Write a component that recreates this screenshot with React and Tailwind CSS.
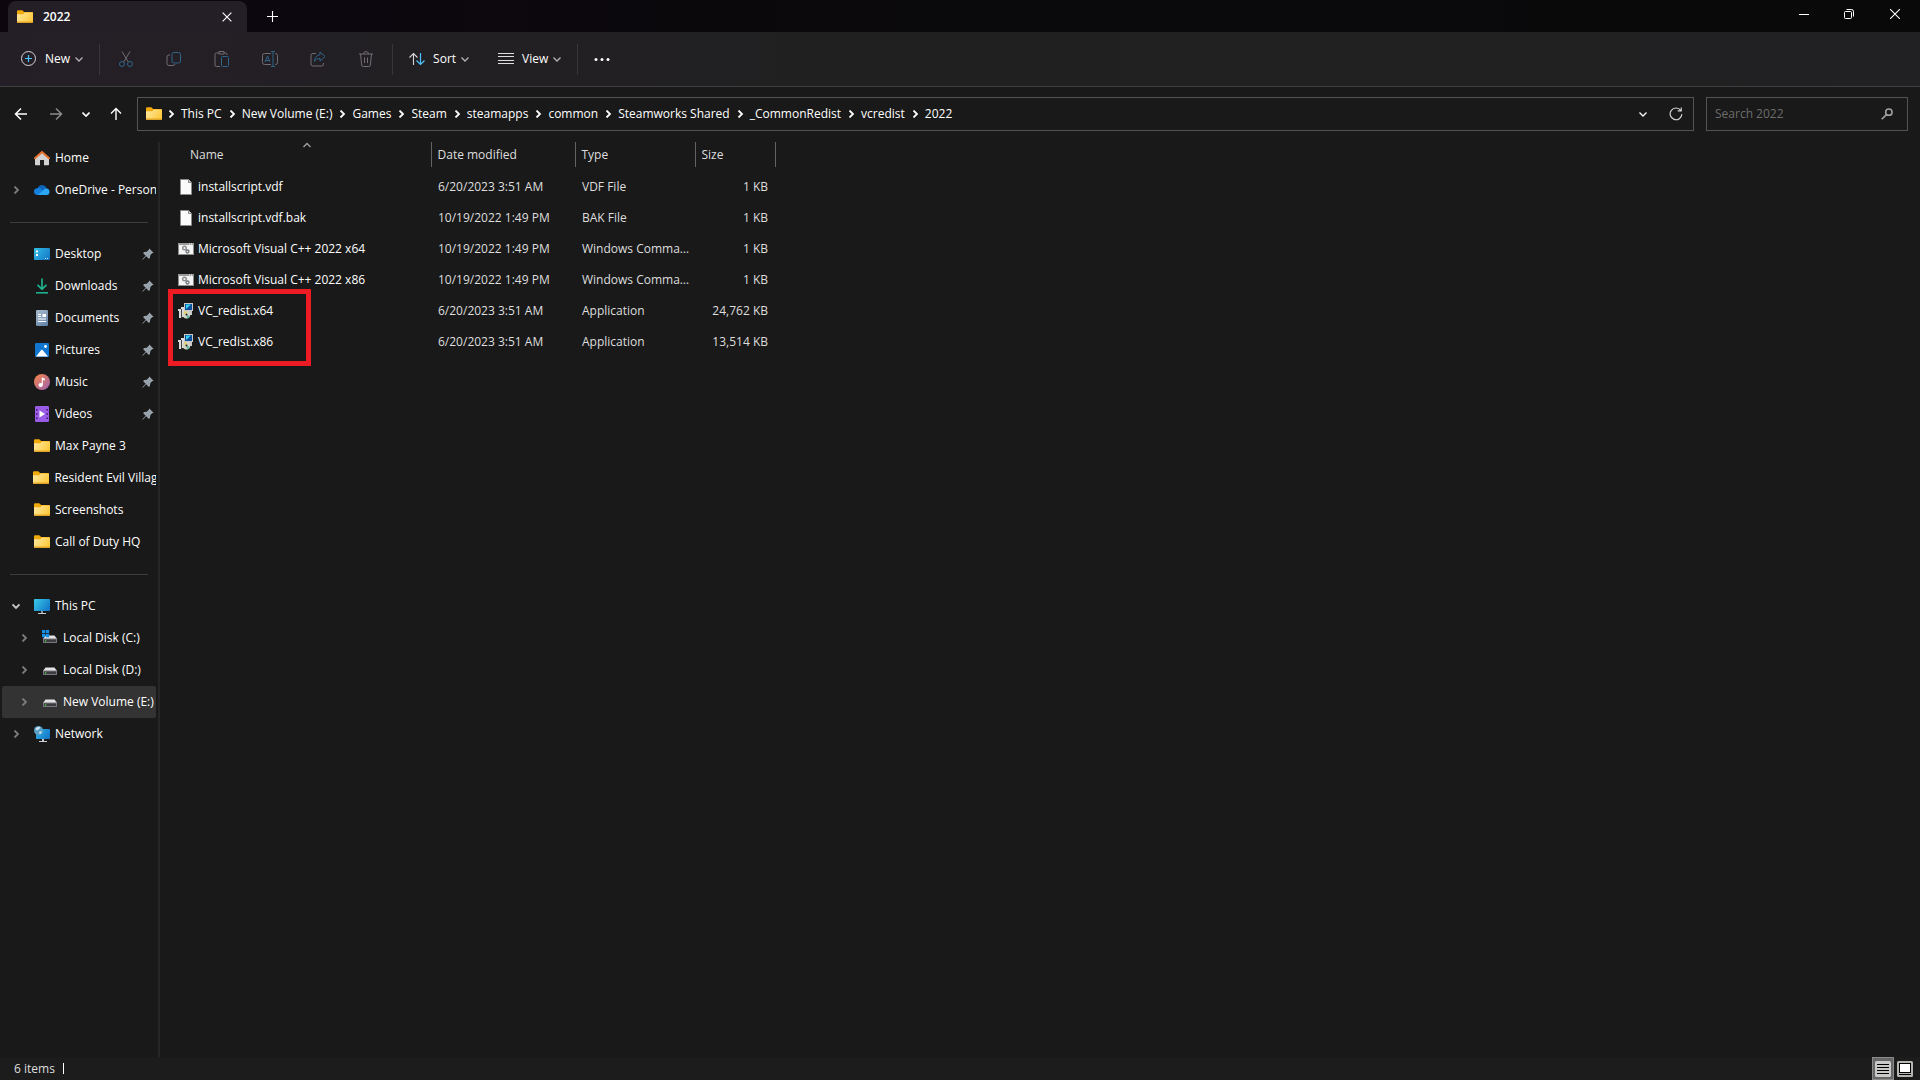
import { useState } from "react";

const breadcrumbs = [
  "This PC",
  "New Volume (E:)",
  "Games",
  "Steam",
  "steamapps",
  "common",
  "Steamworks Shared",
  "_CommonRedist",
  "vcredist",
  "2022",
];

const pinned = [
  { name: "Desktop", icon: DesktopIcon, pin: true },
  { name: "Downloads", icon: DownloadsIcon, pin: true },
  { name: "Documents", icon: DocumentsIcon, pin: true },
  { name: "Pictures", icon: PicturesIcon, pin: true },
  { name: "Music", icon: MusicIcon, pin: true },
  { name: "Videos", icon: VideosIcon, pin: true },
  { name: "Max Payne 3", icon: FolderIcon },
  { name: "Resident Evil Village", icon: FolderIcon },
  { name: "Screenshots", icon: FolderIcon },
  { name: "Call of Duty HQ", icon: FolderIcon },
];

const files = [
  { name: "installscript.vdf", date: "6/20/2023 3:51 AM", type: "VDF File", size: "1 KB", icon: FileIcon },
  { name: "installscript.vdf.bak", date: "10/19/2022 1:49 PM", type: "BAK File", size: "1 KB", icon: FileIcon },
  { name: "Microsoft Visual C++ 2022 x64", date: "10/19/2022 1:49 PM", type: "Windows Command Script", size: "1 KB", icon: BatchIcon },
  { name: "Microsoft Visual C++ 2022 x86", date: "10/19/2022 1:49 PM", type: "Windows Command Script", size: "1 KB", icon: BatchIcon },
  { name: "VC_redist.x64", date: "6/20/2023 3:51 AM", type: "Application", size: "24,762 KB", icon: InstallerIcon },
  { name: "VC_redist.x86", date: "6/20/2023 3:51 AM", type: "Application", size: "13,514 KB", icon: InstallerIcon },
];

/* ---------- icons ---------- */

function Svg({ children, className = "size-4", ...props }) {
  return (
    <svg
      viewBox="0 0 16 16"
      fill="none"
      aria-hidden="true"
      className={`shrink-0 ${className}`}
      {...props}
    >
      {children}
    </svg>
  );
}

function FolderIcon() {
  return (
    <Svg>
      <path d="M0 2.5C0 1.7.6 1.2 1.3 1.2h4l1.8 1.9H15c.6 0 1 .4 1 1V8H0z" fill="#f2a90c" />
      <path d="M0 5.2h6.2l1.6-1.6H15c.6 0 1 .4 1 1v8.2c0 .7-.4 1.1-1 1.1H1c-.6 0-1-.4-1-1.1z" fill="url(#folder)" />
      <path d="M0 12.8c0 .7.4 1.1 1 1.1h14c.6 0 1-.4 1-1.1v-.3H0z" fill="#e0a526" />
      <defs>
        <linearGradient id="folder" x1="0" y1="3" x2="16" y2="14" gradientUnits="userSpaceOnUse">
          <stop stopColor="#ffe9a6" />
          <stop offset="1" stopColor="#fdc62f" />
        </linearGradient>
      </defs>
    </Svg>
  );
}

function HomeIcon() {
  return (
    <Svg>
      <path d="M1 7.5 8 2l7 5.500V14.500c0 .4-.3.7-.7.7H10V10H6v5.200H1.700c-.4 0-.7-.3-.7-.7z" fill="#d2d2d2" />
      <path d="M.9 8.200 8 1.900l7.100 6.300" stroke="#e5702a" strokeWidth="2" strokeLinecap="round" strokeLinejoin="round" />
      <path d="M6 10h4v5.200H6z" fill="#1d1d1d" />
    </Svg>
  );
}

function CloudIcon() {
  return (
    <Svg>
      <path d="M3.500 6.200C4.500 3.900 6.200 3 8 3c2.200 0 4 1.400 4.600 3.500L9 9.500z" fill="#0f63b8" />
      <path d="M3.200 13A3.200 3.200 0 0 1 3.500 6.200c1.500-.4 3 .1 4.200 1.200L14 11.500 12 13z" fill="#1480dc" />
      <path d="M4 13 9.500 7.900c.8-1 2-1.500 3.200-1.400A3.300 3.300 0 0 1 12.900 13z" fill="#2ba6f2" />
    </Svg>
  );
}

function DesktopIcon() {
  return (
    <Svg>
      <rect y="2" width="16" height="12" rx="1" fill="url(#desk)" />
      <path d="M2 4.500h2v2H2zM2 8h2v2H2z" fill="#fff" />
      <path d="M11 12h1v1h-1zM13 12h1v1h-1z" fill="#bfe6fb" />
      <defs>
        <linearGradient id="desk" x1="0" y1="2" x2="16" y2="14" gradientUnits="userSpaceOnUse">
          <stop stopColor="#33bfe8" />
          <stop offset="1" stopColor="#1273c4" />
        </linearGradient>
      </defs>
    </Svg>
  );
}

function DownloadsIcon() {
  return (
    <Svg>
      <path d="M8 .5v10.200M3.500 6.800 8 11.200l4.500-4.400" stroke="#1db08c" strokeWidth="1.700" />
      <path d="M2 14.800h12" stroke="#1db08c" strokeWidth="1.600" />
    </Svg>
  );
}

function DocumentsIcon() {
  return (
    <Svg>
      <rect x="2" width="12" height="16" rx="1.200" fill="url(#doc)" />
      <path d="M4 4.500h3M4 6.500h3M4 9h8M4 11.500h8" stroke="#fff" strokeWidth="1.200" />
      <path d="M8.500 4h3.500v3H8.500z" fill="#fff" />
      <defs>
        <linearGradient id="doc" x1="2" y1="0" x2="14" y2="16" gradientUnits="userSpaceOnUse">
          <stop stopColor="#a9bccf" />
          <stop offset="1" stopColor="#5f7fa3" />
        </linearGradient>
      </defs>
    </Svg>
  );
}

function PicturesIcon() {
  return (
    <Svg>
      <rect x="1" y="1" width="14" height="14" rx="1" fill="#1176cf" />
      <path d="M2 14.500 7 8.300c.5-.6 1.300-.6 1.800 0L14 14.500z" fill="#fff" />
      <circle cx="11.500" cy="4.500" r="1.400" fill="#fff" />
    </Svg>
  );
}

function MusicIcon() {
  return (
    <Svg>
      <circle cx="8" cy="8" r="8" fill="url(#music)" />
      <ellipse cx="6.700" cy="11" rx="2.200" ry="1.900" fill="#fff" />
      <path d="M7.800 11V3.200l3 1.500v2L8.900 5.700V11z" fill="#fff" />
      <defs>
        <linearGradient id="music" x1="2" y1="2" x2="14" y2="15" gradientUnits="userSpaceOnUse">
          <stop stopColor="#ee8253" />
          <stop offset="1" stopColor="#a463a8" />
        </linearGradient>
      </defs>
    </Svg>
  );
}

function VideosIcon() {
  return (
    <Svg>
      <rect x="1" width="14" height="16" rx="1.200" fill="#9a5be6" />
      <path d="M2 3h1.500v1.500H2zM2 7.200h1.500v1.500H2zM2 11.500h1.500V13H2zM12.500 3H14v1.500h-1.500zM12.500 7.200H14v1.500h-1.500zM12.500 11.500H14V13h-1.500z" fill="#3c1a72" />
      <path d="M5.500 4.500 11 8l-5.500 3.500z" fill="#fff" />
    </Svg>
  );
}

function MonitorIcon() {
  return (
    <Svg>
      <rect y="1" width="16" height="12" rx=".8" fill="url(#mon)" />
      <path d="M7 13h2v2H7z" fill="#8b97a1" />
      <path d="M4 15h8v1H4z" fill="#c7ced3" />
      <defs>
        <linearGradient id="mon" x1="0" y1="1" x2="16" y2="13" gradientUnits="userSpaceOnUse">
          <stop stopColor="#37cbe6" />
          <stop offset="1" stopColor="#1271c6" />
        </linearGradient>
      </defs>
    </Svg>
  );
}

function NetworkIcon() {
  return (
    <Svg>
      <rect x="2" y="3" width="14" height="10" rx=".8" fill="url(#mon2)" />
      <path d="M8 13h2v2H8zM5 15h8v1H5z" fill="#c7ced3" />
      <circle cx="4.500" cy="4.500" r="4.500" fill="#5b9fc4" />
      <path d="M1.500 2.500C3 .8 5 .6 6 1.200c.5 1-.8 1.700-1.500 2.300S2 5 1.500 2.500zM5 6c1-.9 2.500-.6 3-.2-.3 1.200-1 2-2.200 2.500z" fill="#cfe6f0" />
      <defs>
        <linearGradient id="mon2" x1="2" y1="3" x2="16" y2="13" gradientUnits="userSpaceOnUse">
          <stop stopColor="#2fb4e4" />
          <stop offset="1" stopColor="#1271c6" />
        </linearGradient>
      </defs>
    </Svg>
  );
}

function DriveIcon({ system }) {
  return (
    <Svg>
      <path d="M3.500 5.500h9L15 9H1z" fill="#e3e3e6" />
      <rect x="1" y="8.500" width="14" height="4.500" rx=".6" fill="#77787b" />
      <path d="M2 9.500h12V12H2z" fill="#3b3c3e" />
      <path d="M3 10.200h1.200v1.200H3z" fill="#4fe04f" />
      {system && (
        <path d="M0 0h3.300v3.300H0zM3.900 0h3.300v3.300H3.900zM0 3.900h3.300v3.300H0zM3.900 3.900h3.300v3.300H3.900z" fill="#1690e6" />
      )}
    </Svg>
  );
}

function SystemDriveIcon() {
  return <DriveIcon system />;
}

function FileIcon() {
  return (
    <Svg>
      <path d="M2.500.5h8L13.500 3.500v12h-11z" fill="#fbfbfb" stroke="#8a8a8a" />
      <path d="M10.500.5v3h3" fill="#d5d5d5" stroke="#8a8a8a" />
    </Svg>
  );
}

function BatchIcon() {
  return (
    <Svg>
      <rect x=".5" y="2.500" width="15" height="11" fill="#f4f4f4" stroke="#8c8c8c" />
      <path d="M0 2h16v2H0z" fill="#9b9b9b" />
      <path d="M11 2.500h1v1h-1zM13 2.500h1v1h-1z" fill="#fff" />
      <circle cx="6.500" cy="7" r="1.800" stroke="#8b8f96" strokeWidth="1.400" />
      <circle cx="9.500" cy="10.500" r="1.500" stroke="#6f7379" strokeWidth="1.300" />
    </Svg>
  );
}

function InstallerIcon() {
  return (
    <Svg>
      <path d="M6 0h9v8h-1v4h-3V9H6z" fill="#c9c9c9" />
      <path d="M7 1h7v6H7z" fill="#0b4f9c" />
      <path d="M8 1.500h5L8 6z" fill="#37d3f4" />
      <path d="M3 4h3v10H4V6H3zM0 6h3v9H1V8H0z" fill="#dcdcdc" />
      <path d="M3 6h1v9H3z" fill="#444" />
      <circle cx="8.500" cy="11.800" r="3.700" fill="#d4d6c4" />
      <path d="M8.500 11.500 5.500 9.500a4 4 0 0 1 3-1.500z" fill="#e3d255" />
      <path d="M8.500 11.500 12 13.200a4 4 0 0 1-3 2.200z" fill="#5fb4a0" />
      <circle cx="8.500" cy="11.500" r="1" fill="#222" />
    </Svg>
  );
}

function PinIcon() {
  return (
    <Svg className="size-3">
      <path d="M9.800.6 15.400 6.200 13.600 7l-2.600 2.700-.4 3.600-1.500 1.200-3.500-3.500L1 15.600.4 15 5 10.400 1.500 6.900l1.200-1.500 3.600-.4L9 2.400z" fill="#97a2ab" />
    </Svg>
  );
}

function Chevron({ dir = "right", className = "", weight = "1.3" }) {
  const paths = {
    right: "M2.500 0.500 6 4 2.500 7.500",
    down: "M0.500 2.500 4 6 7.500 2.500",
    up: "M0.500 6 4 2.500 7.500 6",
  };
  return (
    <svg viewBox="0 0 8 8" fill="none" stroke="currentColor" aria-hidden="true" className={`size-2 shrink-0 ${className}`}>
      <path d={paths[dir]} strokeWidth={weight} />
    </svg>
  );
}

/* ---------- title bar ---------- */

function TitleBar() {
  return (
    <header className="flex h-8 items-end bg-linear-to-r from-[#0d060f] via-[#0a090b] to-[#09090a] pl-2">
      <div className="flex h-[31px] w-[239px] items-center gap-[10px] rounded-t-lg bg-[#241f26] pr-2 pl-[9px]">
        <FolderIcon />
        <span className="grow text-xs font-semibold">2022</span>
        <button aria-label="Close tab" className="grid size-6 place-items-center">
          <Svg className="size-[10px]" stroke="currentColor">
            <path d="M1 1l14 14M15 1 1 15" strokeWidth="1.800" />
          </Svg>
        </button>
      </div>
      <button aria-label="New tab" className="ml-[13px] grid h-8 w-6 place-items-center">
        <Svg className="size-[11px]" stroke="currentColor">
          <path d="M8 0v16M0 8h16" strokeWidth="1.600" />
        </Svg>
      </button>
      <div className="mr-px ml-auto flex h-7 self-start">
        <button aria-label="Minimize" className="grid w-[45px] place-items-center">
          <span className="h-px w-[10px] bg-white" />
        </button>
        <button aria-label="Restore" className="grid w-[45px] place-items-center">
          <Svg className="size-[10px]" viewBox="0 0 10 10" stroke="currentColor">
            <rect x=".5" y="2.500" width="7" height="7" rx="1" />
            <path d="M2.500.5h5a2 2 0 0 1 2 2v5" />
          </Svg>
        </button>
        <button aria-label="Close" className="grid w-12 place-items-center">
          <Svg className="size-[10px]" stroke="currentColor">
            <path d="M0 0l16 16M16 0 0 16" strokeWidth="1.700" />
          </Svg>
        </button>
      </div>
    </header>
  );
}

/* ---------- command bar ---------- */

function Divider() {
  return <span className="h-[31px] w-px bg-[#39353b]" />;
}

const disabledActions = [
  {
    label: "Cut",
    art: (
      <>
        <path d="M4 .5 10.300 11M12 .5 5.700 11" stroke="#716d73" />
        <circle cx="4" cy="13" r="2.500" stroke="#2f6589" />
        <circle cx="12" cy="13" r="2.500" stroke="#2f6589" />
      </>
    ),
  },
  {
    label: "Copy",
    art: (
      <>
        <path d="M4 4H3a2 2 0 0 0-2 2v6.500a2 2 0 0 0 2 2h4a2 2 0 0 0 2-1.500" stroke="#716d73" />
        <rect x="6" y="1.500" width="8.500" height="10.500" rx="2" stroke="#2f6589" />
      </>
    ),
  },
  {
    label: "Paste",
    art: (
      <>
        <path d="M5 2H2.500a1.500 1.500 0 0 0-1.500 1.500v10.500a1.500 1.500 0 0 0 1.500 1.500H6M10 2h1.500A1.500 1.500 0 0 1 13 3.500V4M5 .5h5V3H5z" stroke="#716d73" />
        <rect x="7.500" y="5.500" width="7" height="10" rx="1" stroke="#2f6589" />
      </>
    ),
  },
  {
    label: "Rename",
    art: (
      <>
        <path d="M9 2.500H2.500a2 2 0 0 0-2 2v7a2 2 0 0 0 2 2H9M13 2.500h.5a2 2 0 0 1 2 2v7a2 2 0 0 1-2 2H13" stroke="#716d73" />
        <path d="M3 11 5.500 5l2.500 6M3.800 9.500h3.400M9 .5h4M9 15.500h4M11 .5v15" stroke="#2f6589" />
      </>
    ),
  },
  {
    label: "Share",
    art: (
      <>
        <path d="M6 2.500H3a2 2 0 0 0-2 2V13a2 2 0 0 0 2 2h8.500a2 2 0 0 0 2-2v-1" stroke="#716d73" />
        <path d="M10 1l5 4.500-5 4.500V7.500C7 7.500 5.500 8.500 4.500 10.500 4.500 6.500 7 4 10 3.700z" stroke="#2f6589" strokeLinejoin="round" />
      </>
    ),
  },
  {
    label: "Delete",
    art: (
      <path d="M1 3h14M5.500 3C5.500 1.500 6.500.7 8 .7s2.500.8 2.500 2.300M2.500 3l1.200 11a1.500 1.500 0 0 0 1.500 1.500h5.600a1.500 1.500 0 0 0 1.500-1.500L13.500 3M6.500 6.500v5.500M9.500 6.500v5.500" stroke="#716d73" />
    ),
  },
];

function CommandBar() {
  return (
    <div className="flex h-[55px] items-center border-b border-[#3f3f3f] bg-linear-to-r from-[#241f26] via-[#202020] to-[#212123]">
      <button className="flex items-center pr-4 pl-[21px] text-xs font-medium">
        <Svg>
          <circle cx="7.500" cy="7.500" r="7" stroke="#d6d4d6" />
          <path d="M7.500 4v7M4 7.500h7" stroke="#4cc2ff" strokeWidth="1.200" />
        </Svg>
        <span className="mr-[5px] ml-2">New</span>
        <Chevron dir="down" className="text-[#b5b3b6]" />
      </button>
      <Divider />
      <div className="flex items-center px-[2px]">
        {disabledActions.map(({ label, art }) => (
          <button key={label} disabled aria-label={label} className="grid h-8 w-12 place-items-center">
            <Svg>{art}</Svg>
          </button>
        ))}
      </div>
      <Divider />
      <button className="flex items-center pr-[13px] pl-4 text-xs font-medium">
        <Svg>
          <path d="M4.500 14V2.500M.5 6.500l4-4 4 4" stroke="#d6d4d6" strokeWidth="1.100" />
          <path d="M11.500 2v11.500M7.500 9.500l4 4 4-4" stroke="#4cc2ff" strokeWidth="1.200" />
        </Svg>
        <span className="mr-[5px] ml-2">Sort</span>
        <Chevron dir="down" className="text-[#b5b3b6]" />
      </button>
      <button className="flex items-center px-4 text-xs font-medium">
        <Svg>
          <path d="M0 2.500h16M0 5.500h16M0 9.500h16M0 12.500h16" stroke="#dedcde" />
        </Svg>
        <span className="mr-[5px] ml-2">View</span>
        <Chevron dir="down" className="text-[#b5b3b6]" />
      </button>
      <Divider />
      <button aria-label="See more" className="px-4">
        <Svg fill="currentColor">
          <circle cx="2" cy="8.500" r="1.500" />
          <circle cx="8" cy="8.500" r="1.500" />
          <circle cx="14" cy="8.500" r="1.500" />
        </Svg>
      </button>
    </div>
  );
}

/* ---------- address bar ---------- */

function AddressBar() {
  const [query, setQuery] = useState("");

  return (
    <div className="flex h-[55px] items-center pr-3 pb-px pl-[13px]">
      <nav aria-label="History" className="flex w-[124px] items-center">
        <button aria-label="Back" className="mr-[19px]">
          <Svg stroke="#fff">
            <path d="M14 8H2.500M8 2.500 2.500 8 8 13.500" strokeWidth="1.500" />
          </Svg>
        </button>
        <button aria-label="Forward" className="mr-[14px] text-[#8d8a8e]">
          <Svg stroke="currentColor">
            <path d="M2 8h11.500M8 2.500 13.500 8 8 13.500" strokeWidth="1.500" />
          </Svg>
        </button>
        <button aria-label="Recent locations" className="mr-[14px] grid size-4 place-items-center">
          <Chevron dir="down" weight="1.6" />
        </button>
        <button aria-label="Up">
          <Svg stroke="#fff">
            <path d="M8 14V2.500M3 7.500l5-5 5 5" strokeWidth="1.400" />
          </Svg>
        </button>
      </nav>
      <div className="flex h-[34px] grow items-center border border-[#535353] pr-[10px] pl-2">
        <FolderIcon />
        <ol className="flex grow items-center pl-[5px]">
          {breadcrumbs.map((crumb) => (
            <li key={crumb} className="flex items-center">
              <Chevron className="mr-[6px]" weight="1.8" />
              <a href="#" className="pr-[6px]">{crumb}</a>
            </li>
          ))}
        </ol>
        <button aria-label="Previous locations" className="mr-[22px]">
          <Chevron dir="down" />
        </button>
        <button aria-label="Refresh">
          <Svg className="size-[14px]" stroke="#d8d8d8">
            <path d="M13.500 4A6.700 6.700 0 1 0 14.700 8M14 .5V4.500H10" strokeWidth="1.300" />
          </Svg>
        </button>
      </div>
      <label className="ml-3 flex h-[34px] w-[202px] items-center border border-[#535353] pr-[14px] pl-2">
        <input
          type="text"
          aria-label="Search 2022"
          placeholder="Search 2022"
          value={query}
          onChange={(e) => setQuery(e.target.value)}
          className="w-full min-w-0 bg-transparent outline-none placeholder:text-[#6d6d6d]"
        />
        <Svg className="size-3" stroke="#a3a3a3">
          <circle cx="10.500" cy="5.500" r="4.300" strokeWidth="2" />
          <path d="M7.500 8.500 1 15" strokeWidth="2.200" />
        </Svg>
      </label>
    </div>
  );
}

/* ---------- navigation pane ---------- */

function NavItem({ name, icon: Icon, expand, nested, pin, selected }) {
  return (
    <li
      className={`flex h-8 items-center rounded-xs ${selected ? "bg-[#333333]" : ""} ${nested ? "pl-[18px]" : "pl-[10px]"}`}
    >
      <span className="mr-[14px] w-2">
        {expand && (
          <Chevron
            dir={expand}
            weight="1.8"
            className={expand === "down" ? "text-[#c8c8c8]" : "text-[#7d7d7d]"}
          />
        )}
      </span>
      <Icon />
      <a href="#" className="ml-[5px] min-w-0 grow overflow-hidden whitespace-nowrap">
        {name}
      </a>
      {pin && (
        <span className="mr-[2px]">
          <PinIcon />
        </span>
      )}
    </li>
  );
}

function NavSeparator() {
  return (
    <li role="separator" className="flex h-8 items-center px-2">
      <span className="h-px grow bg-[#3d3d3d]" />
    </li>
  );
}

function Sidebar() {
  return (
    <nav aria-label="Folders" className="w-40 shrink-0 border-r-2 border-[#262626] px-[2px]">
      <ul>
        <NavItem name="Home" icon={HomeIcon} />
        <NavItem name="OneDrive - Personal" icon={CloudIcon} expand="right" />
        <NavSeparator />
        {pinned.map((item) => (
          <NavItem key={item.name} {...item} />
        ))}
        <NavSeparator />
        <NavItem name="This PC" icon={MonitorIcon} expand="down" />
        <NavItem name="Local Disk (C:)" icon={SystemDriveIcon} expand="right" nested />
        <NavItem name="Local Disk (D:)" icon={DriveIcon} expand="right" nested />
        <NavItem name="New Volume (E:)" icon={DriveIcon} expand="right" nested selected />
        <NavItem name="Network" icon={NetworkIcon} expand="right" />
      </ul>
    </nav>
  );
}

/* ---------- file list ---------- */

function FileList() {
  return (
    <main className="relative min-w-0 grow">
      <table className="w-[615px] table-fixed border-collapse text-left">
        <colgroup>
          <col className="w-[271px]" />
          <col className="w-36" />
          <col className="w-[120px]" />
          <col className="w-20" />
        </colgroup>
        <thead className="text-[#dedede]">
          <tr className="h-[25px]">
            <th className="relative border-r border-[#636363] pl-[30px] font-normal">
              Name
              <Chevron dir="up" className="absolute -top-px left-[143px] text-[#a0a0a0]" />
            </th>
            <th className="border-r border-[#636363] pl-[6px] font-normal">Date modified</th>
            <th className="border-r border-[#636363] pl-[6px] font-normal">Type</th>
            <th className="border-r border-[#636363] pl-[6px] font-normal">Size</th>
          </tr>
        </thead>
        <tbody className="text-[#dedede] before:block before:h-1">
          {files.map(({ name, date, type, size, icon: Icon }) => (
            <tr key={name} className="h-[31px]">
              <td className="pl-[18px] text-white">
                <span className="flex items-center gap-1 whitespace-nowrap">
                  <Icon />
                  {name}
                </span>
              </td>
              <td className="pl-[7px] whitespace-nowrap">{date}</td>
              <td className="truncate pl-[7px]">{type}</td>
              <td className="pr-[7px] text-right whitespace-nowrap">{size}</td>
            </tr>
          ))}
        </tbody>
      </table>
      {/* highlight around the two installers */}
      <div className="pointer-events-none absolute top-[147px] left-2 h-[77px] w-[143px] border-5 border-[#ed1c24]" />
    </main>
  );
}

/* ---------- status bar ---------- */

function StatusBar() {
  return (
    <footer className="flex h-[23px] items-center bg-[#1c1c1c] pr-[7px] pl-[14px] text-[#dedede]">
      <span>6 items</span>
      <span className="ml-2 h-[11px] w-px bg-white" />
      <div className="ml-auto flex items-center gap-[3px]">
        <button aria-label="Details view" className="grid h-[23px] w-[22px] place-items-center border border-[#8a8a8a] bg-[#666666]">
          <Svg>
            <rect width="16" height="16" rx="1.500" fill="#c9cac7" />
            <path d="M2 3.500h12M2 6.500h12M2 9.500h12M2 12.500h12" stroke="#000" />
          </Svg>
        </button>
        <button aria-label="Large icons view">
          <Svg>
            <rect width="16" height="16" rx="1.500" fill="#b5b5b2" />
            <rect x="2.500" y="2.500" width="11" height="9" fill="#fff" stroke="#000" />
            <path d="M2 13.500h12" stroke="#000" />
          </Svg>
        </button>
      </div>
    </footer>
  );
}

export default function App() {
  return (
    <div className="flex min-h-screen flex-col bg-[#191919] font-['Open_Sans','Noto_Sans',sans-serif] text-xs text-white">
      <TitleBar />
      <CommandBar />
      <AddressBar />
      <div className="flex grow">
        <Sidebar />
        <FileList />
      </div>
      <StatusBar />
    </div>
  );
}
